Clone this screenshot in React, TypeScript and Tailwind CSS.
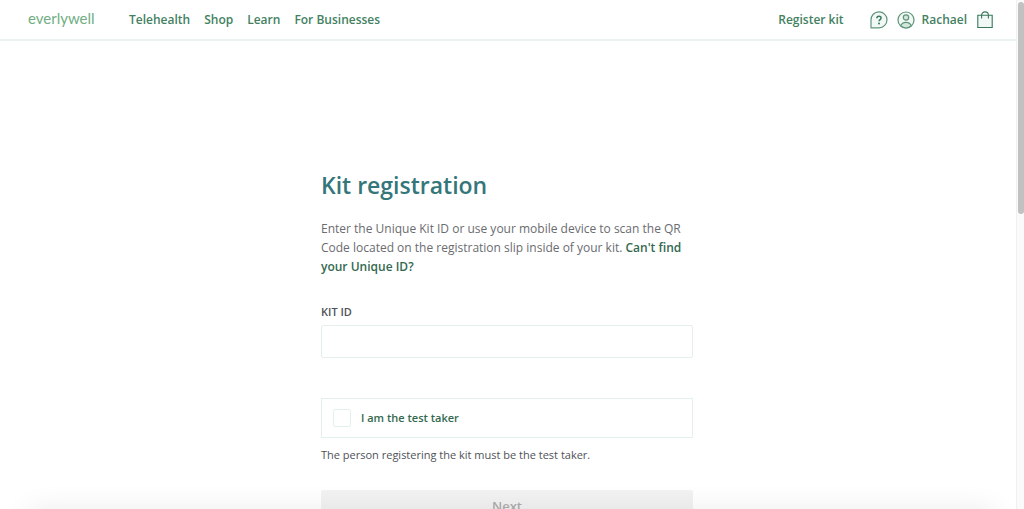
import { useState } from 'react'
import type { FormEvent } from 'react'

const NAV_LINKS = ['Telehealth', 'Shop', 'Learn', 'For Businesses']

function HelpIcon() {
  return (
    <svg className="h-[18px] w-[18px]" viewBox="0 0 18 18" fill="none" stroke="#5d957a" strokeWidth={1.2} aria-hidden="true">
      <path d="M1 16.8V9a8 8 0 1 1 8 7.8Z" fill="#f2f8f5" strokeLinejoin="round" />
      <path d="M6.9 7.3c0-1.3.9-2.1 2.1-2.1s2.1.8 2.1 1.9c0 1.5-2 1.6-2 3.2" stroke="#37795a" strokeWidth={1.5} />
      <circle cx="9" cy="12.6" r="1" fill="#37795a" stroke="none" />
    </svg>
  )
}

function AccountIcon() {
  return (
    <svg className="h-[18px] w-[18px]" viewBox="0 0 18 18" fill="none" stroke="#5d957a" strokeWidth={1.2} aria-hidden="true">
      <circle cx="9" cy="9" r="8" fill="#f2f8f5" />
      <path d="M3.7 14.8c.8-2.2 2.9-3.5 5.3-3.5s4.5 1.3 5.3 3.5A8 8 0 0 1 9 17a8 8 0 0 1-5.3-2.2Z" fill="#d3e8dc" />
      <circle cx="9" cy="6.5" r="2.7" fill="#d3e8dc" />
    </svg>
  )
}

function BagIcon() {
  return (
    <svg className="h-[18px] w-4" viewBox="0 0 16 18" fill="none" stroke="#37795a" strokeWidth={1.1} aria-hidden="true">
      <path d="M.8 4.3h14.4v12.2H.8Z" fill="#f2f8f5" />
      <path d="M4.6 7.5V4.2C4.6 2.3 6 .9 8 .9s3.4 1.4 3.4 3.3v3.3" />
    </svg>
  )
}

function Header() {
  return (
    <header className="flex h-[41px] items-center justify-between border-b-2 border-[#ebf3f1] pr-[23px] pl-7 text-xs font-semibold text-[#43815f]">
      <div className="flex items-center">
        <a href="#" className="w-[101px] pb-1 font-['Lato',sans-serif] text-[15px] leading-5 font-normal text-[#70ae82]">everlywell</a>
        <nav className="flex gap-3.5">
          {NAV_LINKS.map((label) => (
            <a key={label} href="#" className="whitespace-nowrap hover:underline">{label}</a>
          ))}
        </nav>
      </div>
      <div className="flex items-center">
        <a href="#" className="mr-[26px] hover:underline">Register kit</a>
        <a href="#" aria-label="Help" className="mr-[9px]"><HelpIcon /></a>
        <a href="#" className="mr-[10px] flex items-center gap-[7px]"><AccountIcon />Rachael</a>
        <a href="#" aria-label="Cart"><BagIcon /></a>
      </div>
    </header>
  )
}

function RegistrationForm() {
  const [kitId, setKitId] = useState('')
  const [isTaker, setIsTaker] = useState(false)

  function handleSubmit(e: FormEvent) {
    e.preventDefault()
  }

  return (
    <form onSubmit={handleSubmit} className="mx-auto w-full max-w-[372px] pt-32">
      <h1 className="text-[23px] leading-8 font-semibold text-[#35767a]">Kit registration</h1>
      <p className="mt-[18px] text-xs leading-[19px] text-[#6a6c70]">
        Enter the Unique Kit ID or use your mobile device to scan the QR Code located on the registration slip inside of your kit.{' '}
        <a href="#" className="font-semibold text-[#34694f] hover:underline">Can't find your Unique ID?</a>
      </p>

      <label htmlFor="kit-id" className="mt-7 block text-[11px] leading-4 font-semibold text-[#4f5257]">KIT ID</label>
      <input
        id="kit-id"
        value={kitId}
        onChange={(e) => setKitId(e.target.value)}
        className="mt-[5px] block h-[33px] w-full rounded-xs border border-[#e4eeea] px-3 text-xs text-[#4f5257] focus:outline-none"
      />

      <label className="mt-10 flex h-10 items-center gap-[10px] border border-[#e4f0eb] px-[11px] text-[11px] font-semibold text-[#34694f]">
        <input
          type="checkbox"
          checked={isTaker}
          onChange={(e) => setIsTaker(e.target.checked)}
          className="h-[18px] w-[18px] appearance-none rounded-xs border border-[#e4f0eb] checked:bg-[#34694f]"
        />
        I am the test taker
      </label>
      <p className="mt-2 text-[11px] leading-[17px] text-[#4f5257]">The person registering the kit must be the test taker.</p>

      <button type="submit" disabled={!isTaker || !kitId} className="mt-[27px] h-[33px] w-full rounded-xs bg-[#f2f2f2] text-[13px] font-semibold text-[#adadad]">
        Next
      </button>
    </form>
  )
}

export default function App() {
  return (
    <div className="relative flex h-screen overflow-hidden bg-white font-['Open_Sans',sans-serif]">
      <div className="min-w-0 flex-1">
        <Header />
        <main className="pr-0.5">
          <RegistrationForm />
        </main>
      </div>

      {/* Scroll track */}
      <div className="w-2 shrink-0 border-l border-[#f0f0f0] bg-[#fafafa] pt-0.5 pl-px">
        <div className="h-[212px] rounded-full bg-[#c1c1c1]" />
      </div>

      {/* Shadow along the lower edge */}
      <div className="pointer-events-none absolute right-10 bottom-0 left-10 h-0 shadow-[0_14px_30px_12px_rgba(0,0,0,0.09)]" />
    </div>
  )
}
